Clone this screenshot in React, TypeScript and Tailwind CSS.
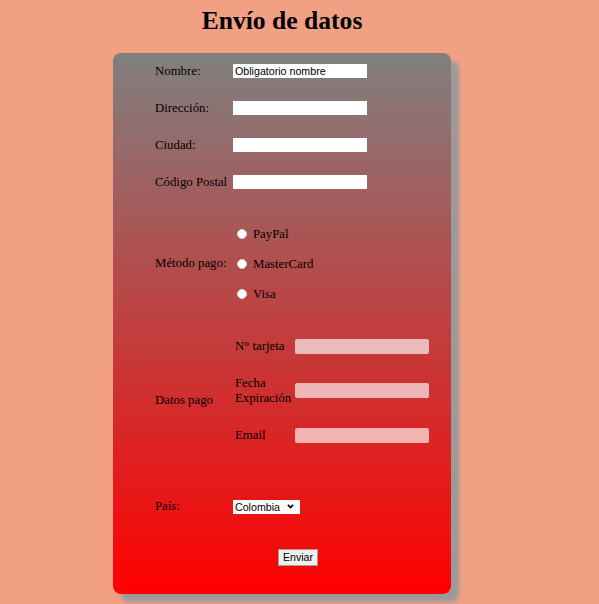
const serif = "font-['Liberation_Serif','Times_New_Roman',serif]"
const sans = "font-['Liberation_Sans',Arial,sans-serif]"

function Row({ label, children }: { label: string; children: React.ReactNode }) {
  return (
    <div className="flex h-[37px] items-center">
      <div className="w-[78px]">{label}</div>
      {children}
    </div>
  )
}

function TextInput({ value = "" }: { value?: string }) {
  return (
    <input
      type="text"
      defaultValue={value}
      className={`${sans} -mt-[1px] h-[14px] w-[134px] border-0 bg-white px-[2px] text-[10.67px] leading-[14px] text-black outline-none`}
    />
  )
}

function Radio({ label }: { label: string }) {
  return (
    <label className="flex h-[30px] items-center">
      <span className="ml-[4px] mr-[6px] h-[10px] w-[10px] rounded-full border border-[#d8d8d8] bg-white" />
      <span className="mt-[1px]">{label}</span>
    </label>
  )
}

function PayInput() {
  return <input type="text" className="h-[15px] w-[134px] rounded-[2px] border-0 bg-white/65 outline-none" />
}

export default function App() {
  return (
    <div className={`${serif} min-h-[604px] bg-[#f1a084] pt-[6px] text-black`}>
      <div className="ml-[113px] w-[338px]">
        <h1 className="text-center text-[25.6px] font-bold leading-[29px]">Envío de datos</h1>

        <form className="mt-[18px] h-[541px] rounded-[8px] bg-[linear-gradient(#808080,#ff0000)] pl-[42px] text-[12.8px] shadow-[8px_8px_4px_#9a9a9a]">
          <Row label="Nombre:">
            <TextInput value="Obligatorio nombre" />
          </Row>
          <Row label="Dirección:">
            <TextInput />
          </Row>
          <Row label="Ciudad:">
            <TextInput />
          </Row>
          <Row label="Código Postal">
            <TextInput />
          </Row>

          <div className="flex items-center pt-[18px]">
            <div className="w-[78px]">Método pago:</div>
            <div className="flex flex-col">
              <Radio label="PayPal" />
              <Radio label="MasterCard" />
              <Radio label="Visa" />
            </div>
          </div>

          <div className="flex items-center pt-[15px]">
            <div className="w-[78px]">Datos pago</div>
            <div className="ml-[2px] grid grid-cols-[58px_134px] gap-x-[2px] pb-[19px]">
              <div className="flex h-[44.5px] items-center">N° tarjeta</div>
              <div className="flex h-[44.5px] items-center">
                <PayInput />
              </div>
              <div className="flex h-[44.5px] items-center leading-[15px]">Fecha Expiración</div>
              <div className="flex h-[44.5px] items-center">
                <PayInput />
              </div>
              <div className="flex h-[44.5px] items-center">Email</div>
              <div className="flex h-[44.5px] items-center">
                <PayInput />
              </div>
            </div>
          </div>

          <div className="flex h-[60px] items-center">
            <div className="w-[78px]">País:</div>
            <div className="relative flex h-[14px] w-[67px] items-center bg-white">
              <select
                defaultValue="Colombia"
                className={`${sans} h-[14px] w-full appearance-none border-0 bg-transparent pl-[2px] text-[10.67px] leading-[14px] text-black outline-none`}
              >
                <option>Colombia</option>
                <option>México</option>
                <option>Argentina</option>
              </select>
              <svg
                viewBox="0 0 10 10"
                className="pointer-events-none absolute right-[5px] top-[3.5px] h-[7px] w-[9px]"
                fill="none"
                stroke="black"
                strokeWidth="2.6"
              >
                <path d="M1.3 2.8l3.7 3.7 3.7-3.7" />
              </svg>
            </div>
          </div>

          <button
            type="button"
            className={`${sans} ml-[123px] mt-[12px] h-[17px] w-[40px] border border-[#a0a0a0] bg-[#efefef] text-[10.67px] leading-[15px] text-black`}
          >
            Enviar
          </button>
        </form>
      </div>
    </div>
  )
}
